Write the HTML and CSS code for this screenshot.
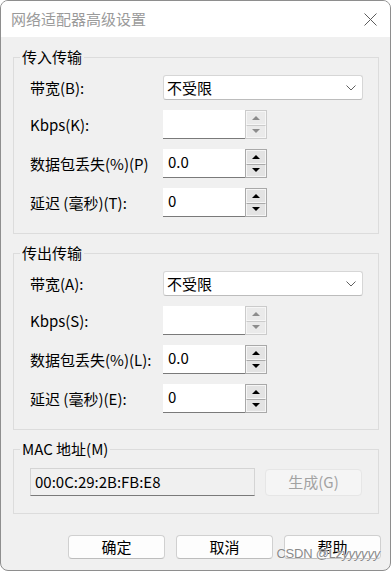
FILE: index.html
```html
<!DOCTYPE html>
<html lang="zh-CN">
<head>
    <meta charset="UTF-8">
    <meta name="viewport" content="width=device-width, initial-scale=1.0">
    <title>网络适配器高级设置</title>
    <link rel="stylesheet" href="styles.css">
</head>
<body>
    <div class="window">
        <div class="titlebar">
            <span class="title">网络适配器高级设置</span>
            <svg class="close" width="13" height="13" viewBox="0 0 13 13">
                <path d="M0.5 0.5 L12.5 12.5 M12.5 0.5 L0.5 12.5" stroke="#5c5c5c" stroke-width="1" fill="none"/>
            </svg>
        </div>

        <div class="content">
            <!-- 传入传输 -->
            <fieldset class="group">
                <legend>传入传输</legend>
                <div class="rows">
                    <label>带宽(B):</label>
                    <div class="select">
                        <span>不受限</span>
                        <svg width="10" height="6" viewBox="0 0 10 6"><path d="M0.5 0.5 L5 5 L9.5 0.5" stroke="#606060" fill="none"/></svg>
                    </div>

                    <label>Kbps(K):</label>
                    <div class="spin disabled">
                        <div class="field"></div>
                        <div class="arrows"><span class="up"></span><span class="down"></span></div>
                    </div>

                    <label>数据包丢失(%)(P)</label>
                    <div class="spin">
                        <div class="field">0.0</div>
                        <div class="arrows"><span class="up"></span><span class="down"></span></div>
                    </div>

                    <label>延迟 (毫秒)(T):</label>
                    <div class="spin">
                        <div class="field">0</div>
                        <div class="arrows"><span class="up"></span><span class="down"></span></div>
                    </div>
                </div>
            </fieldset>

            <!-- 传出传输 -->
            <fieldset class="group">
                <legend>传出传输</legend>
                <div class="rows">
                    <label>带宽(A):</label>
                    <div class="select">
                        <span>不受限</span>
                        <svg width="10" height="6" viewBox="0 0 10 6"><path d="M0.5 0.5 L5 5 L9.5 0.5" stroke="#606060" fill="none"/></svg>
                    </div>

                    <label>Kbps(S):</label>
                    <div class="spin disabled">
                        <div class="field"></div>
                        <div class="arrows"><span class="up"></span><span class="down"></span></div>
                    </div>

                    <label>数据包丢失(%)(L):</label>
                    <div class="spin">
                        <div class="field">0.0</div>
                        <div class="arrows"><span class="up"></span><span class="down"></span></div>
                    </div>

                    <label>延迟 (毫秒)(E):</label>
                    <div class="spin">
                        <div class="field">0</div>
                        <div class="arrows"><span class="up"></span><span class="down"></span></div>
                    </div>
                </div>
            </fieldset>

            <!-- MAC 地址 -->
            <fieldset class="group mac">
                <legend>MAC 地址(M)</legend>
                <div class="mac-row">
                    <div class="mac-field">00:0C:29:2B:FB:E8</div>
                    <button class="btn gen" disabled>生成(G)</button>
                </div>
            </fieldset>

            <div class="actions">
                <button class="btn">确定</button>
                <button class="btn">取消</button>
                <button class="btn">帮助</button>
                <span class="watermark">CSDN @L<i>zyyyyyy</i></span>
            </div>
        </div>
    </div>
</body>
</html>
```

FILE: styles.css
```css
* {
    margin: 0;
    padding: 0;
    box-sizing: border-box;
}

body {
    background: #fff;
    font-family: "Noto Sans CJK SC", sans-serif;
    font-size: 15px;
    line-height: 20px;
    color: #000;
}

.window {
    width: 391px;
    height: 571px;
    border: 1px solid #8e8e8e;
    border-radius: 8px;
    overflow: hidden;
    background: #f0f0f0;
}

.titlebar {
    height: 36px;
    background: #fff;
    display: flex;
    align-items: center;
    justify-content: space-between;
    padding: 0 13px 0 10px;
}

.title {
    color: #9a9a9a;
}

.close {
    margin-top: 1px;
}

.content {
    padding: 10px 11px 0 12px;
    position: relative;
}

.group {
    width: 366px;
    border: 1px solid #dcdcdc;
    padding: 8px 15px 16px 16px;
    margin-bottom: 9px;
}

.group legend {
    padding: 0 2px;
    margin-left: -10px;
    line-height: 20px;
}

.rows {
    display: grid;
    grid-template-columns: 133px auto;
    row-gap: 10px;
    align-items: center;
}

.select {
    height: 25px;
    background: #fff;
    border: 1px solid #d6d6d6;
    border-bottom-color: #bcbcbc;
    border-radius: 3px;
    display: flex;
    align-items: center;
    justify-content: space-between;
    padding: 0 6px 0 3px;
}

.spin {
    display: flex;
    width: 104px;
    height: 29px;
}

.field {
    width: 82px;
    background: #fff;
    border-bottom: 1px solid #7a7a7a;
    padding: 3px 5px 0;
}

.arrows {
    width: 22px;
    border: 1px solid #a9a9a9;
    display: flex;
    flex-direction: column;
}

.arrows span {
    flex: 1;
    background: #e3e3e3;
    border: 1px solid #f6f6f6;
    display: flex;
    align-items: center;
    justify-content: center;
}

.arrows .down {
    border-top: 1px solid #a9a9a9;
}

.arrows span::after {
    content: "";
    border-left: 4px solid transparent;
    border-right: 4px solid transparent;
}

.arrows .up::after {
    border-bottom: 4px solid #000;
}

.arrows .down::after {
    border-top: 4px solid #000;
}

.spin.disabled .arrows {
    border-color: #cbcbcb;
}

.spin.disabled .arrows span {
    background: #eaeaea;
}

.spin.disabled .arrows .down {
    border-top-color: #cbcbcb;
}

.spin.disabled .arrows .up::after {
    border-bottom-color: #8c8c8c;
}

.spin.disabled .arrows .down::after {
    border-top-color: #8c8c8c;
}

.group.mac {
    padding: 9px 15px 17px 16px;
}

.mac-row {
    display: flex;
    align-items: center;
    gap: 10px;
}

.mac-field {
    width: 225px;
    height: 28px;
    border: 1px solid #d4d4d4;
    border-bottom-color: #7a7a7a;
    padding: 3px 4px 0;
}

.btn {
    font-family: inherit;
    font-size: 15px;
    line-height: 20px;
    width: 97px;
    height: 24px;
    background: #fdfdfd;
    border: 1px solid #d0d0d0;
    border-bottom-color: #bdbdbd;
    border-radius: 4px;
    color: #000;
}

.btn.gen {
    height: 27px;
    background: #f5f5f5;
    border-color: #e6e6e6;
    color: #a2a2a2;
}

.actions {
    display: flex;
    justify-content: flex-end;
    gap: 11px;
    margin-top: 21px;
    margin-right: -2px;
    position: relative;
}

.watermark {
    position: absolute;
    right: 1px;
    top: 12px;
    font-family: "Liberation Sans", sans-serif;
    font-size: 13px;
    line-height: 14px;
    color: #8a8a8a;
    text-shadow: 0 0 1px #fff, 0 0 1px #fff;
    letter-spacing: -0.2px;
}
```
